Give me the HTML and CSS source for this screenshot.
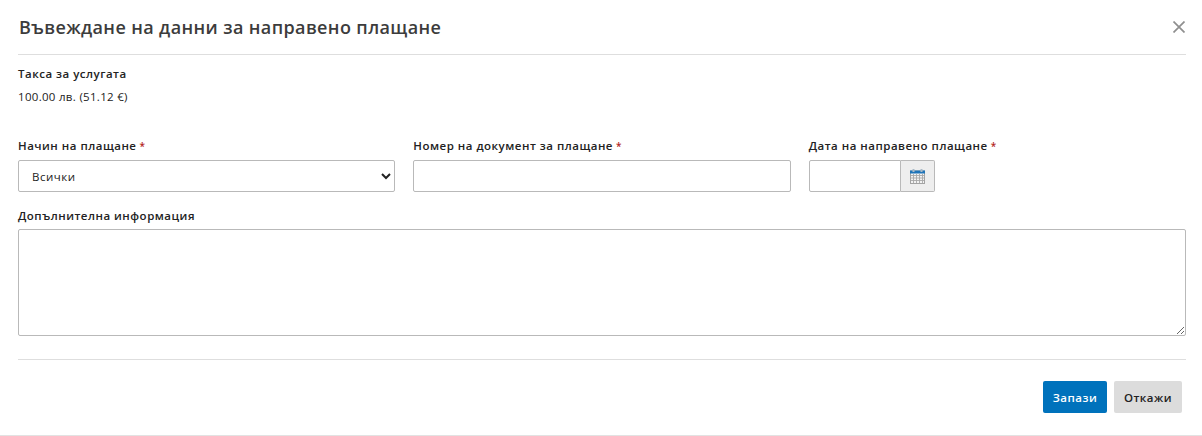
FILE: index.html
```html
<!DOCTYPE html>
<html lang="bg">

<head>
    <meta charset="utf-8">
    <title>Въвеждане на данни за направено плащане</title>
    <link rel="stylesheet" href="styles.css">
</head>

<body>
    <div class="modal">
        <div class="modal_header">
            <h1 class="modal_title">Въвеждане на данни за направено плащане</h1>
            <button class="close_btn" type="button" aria-label="Затвори">
                <svg width="12" height="12" viewBox="0 0 12 12">
                    <path d="M0.5 0.5 L11.5 11.5 M11.5 0.5 L0.5 11.5" stroke="#8f8f8f" stroke-width="1.7" fill="none"/>
                </svg>
            </button>
        </div>

        <div class="fee">
            <div class="label_text">Такса за услугата</div>
            <div class="fee_value">100.00 лв. (51.12 €)</div>
        </div>

        <div class="form_row">
            <div class="field">
                <label class="label_text" for="fmethod">Начин на плащане<span class="req">*</span></label>
                <select class="control" id="fmethod">
                    <option>Всички</option>
                </select>
            </div>
            <div class="field">
                <label class="label_text" for="fnumber">Номер на документ за плащане<span class="req">*</span></label>
                <input class="control" type="text" id="fnumber">
            </div>
            <div class="field">
                <label class="label_text" for="fdate">Дата на направено плащане<span class="req">*</span></label>
                <div class="date_group">
                    <input class="control date_input" type="text" id="fdate">
                    <span class="date_addon">
                        <svg width="15" height="15" viewBox="0 0 15 15">
                            <rect x="0.5" y="2" width="14" height="12.5" fill="#f2f2f2" stroke="#a3a3a3"/>
                            <rect x="0" y="1.5" width="15" height="3" fill="#1f74b8"/>
                            <rect x="2.5" y="0" width="2" height="3" fill="#a9b9c6"/>
                            <rect x="10.5" y="0" width="2" height="3" fill="#a9b9c6"/>
                            <path d="M3.5 5 V14 M6.5 5 V14 M9.5 5 V14 M12.5 5 V14 M1 6.5 H14 M1 9 H14 M1 11.5 H14" stroke="#a8a8a8" stroke-width="0.9" fill="none"/>
                        </svg>
                    </span>
                </div>
            </div>
        </div>

        <div class="field info_field">
            <label class="label_text" for="finfo">Допълнителна информация</label>
            <textarea class="control info_area" id="finfo"></textarea>
        </div>

        <div class="modal_footer">
            <button class="btn btn_primary" type="button">Запази</button>
            <button class="btn btn_default" type="button">Откажи</button>
        </div>
    </div>
</body>

</html>
```

FILE: styles.css
```css
* {
    box-sizing: border-box;
}

body {
    margin: 0;
    height: 436px;
    overflow: hidden;
    background: #fff;
    color: #222;
    font-family: "Open Sans", "Noto Sans", sans-serif;
    font-size: 11.5px;
}

.modal {
    height: 436px;
    padding: 0 16px 0 18px;
    border-bottom: 1px solid #e2e2e2;
}

.modal_header {
    display: flex;
    justify-content: space-between;
    align-items: center;
    height: 55px;
    border-bottom: 1px solid #dedede;
}

.modal_title {
    margin: 0;
    padding-left: 1px;
    font-size: 18px;
    font-weight: 600;
    color: #3c3c3c;
    letter-spacing: 0.38px;
}

.close_btn {
    display: flex;
    margin-right: 1px;
    padding: 0;
    border: 0;
    background: none;
    cursor: pointer;
}

.fee {
    display: flex;
    flex-direction: column;
    gap: 8px;
    padding-top: 11px;
}

.label_text {
    display: block;
    font-weight: 600;
    line-height: 15px;
    letter-spacing: 0.5px;
    color: #222;
}

.fee_value {
    line-height: 15px;
    letter-spacing: 0.3px;
}

.req {
    margin-left: 3px;
    color: #b3261e;
    font-size: 10px;
}

.form_row {
    display: grid;
    grid-template-columns: repeat(3, 1fr);
    gap: 18px;
    margin-top: 34px;
}

.field {
    display: flex;
    flex-direction: column;
    gap: 6px;
}

.info_field {
    margin-top: 16px;
}

.control {
    width: 100%;
    height: 32px;
    padding: 0 9px;
    border: 1px solid #b9b9b9;
    border-radius: 2px;
    background: #fff;
    color: #222;
    font-family: inherit;
    font-size: 11.5px;
    letter-spacing: 0.5px;
}

.date_group {
    display: flex;
    width: 126px;
}

.date_input {
    width: 92px;
    border-radius: 2px 0 0 2px;
}

.date_addon {
    display: flex;
    justify-content: center;
    align-items: center;
    width: 34px;
    height: 32px;
    border: 1px solid #b9b9b9;
    border-left: 0;
    border-radius: 0 2px 2px 0;
    background: #eee;
}

.info_area {
    display: block;
    height: 107px;
}

.modal_footer {
    display: flex;
    justify-content: flex-end;
    gap: 7px;
    margin-top: 23px;
    padding: 21px 4px 0 0;
    border-top: 1px solid #dedede;
}

.btn {
    height: 32px;
    border: 0;
    border-radius: 2px;
    font-family: inherit;
    font-size: 11.5px;
    font-weight: 600;
    letter-spacing: 0.5px;
    cursor: pointer;
}

.btn_primary {
    width: 64px;
    background: #0072bc;
    color: #fff;
}

.btn_default {
    width: 68px;
    background: #dcdcdc;
    color: #222;
}
```
